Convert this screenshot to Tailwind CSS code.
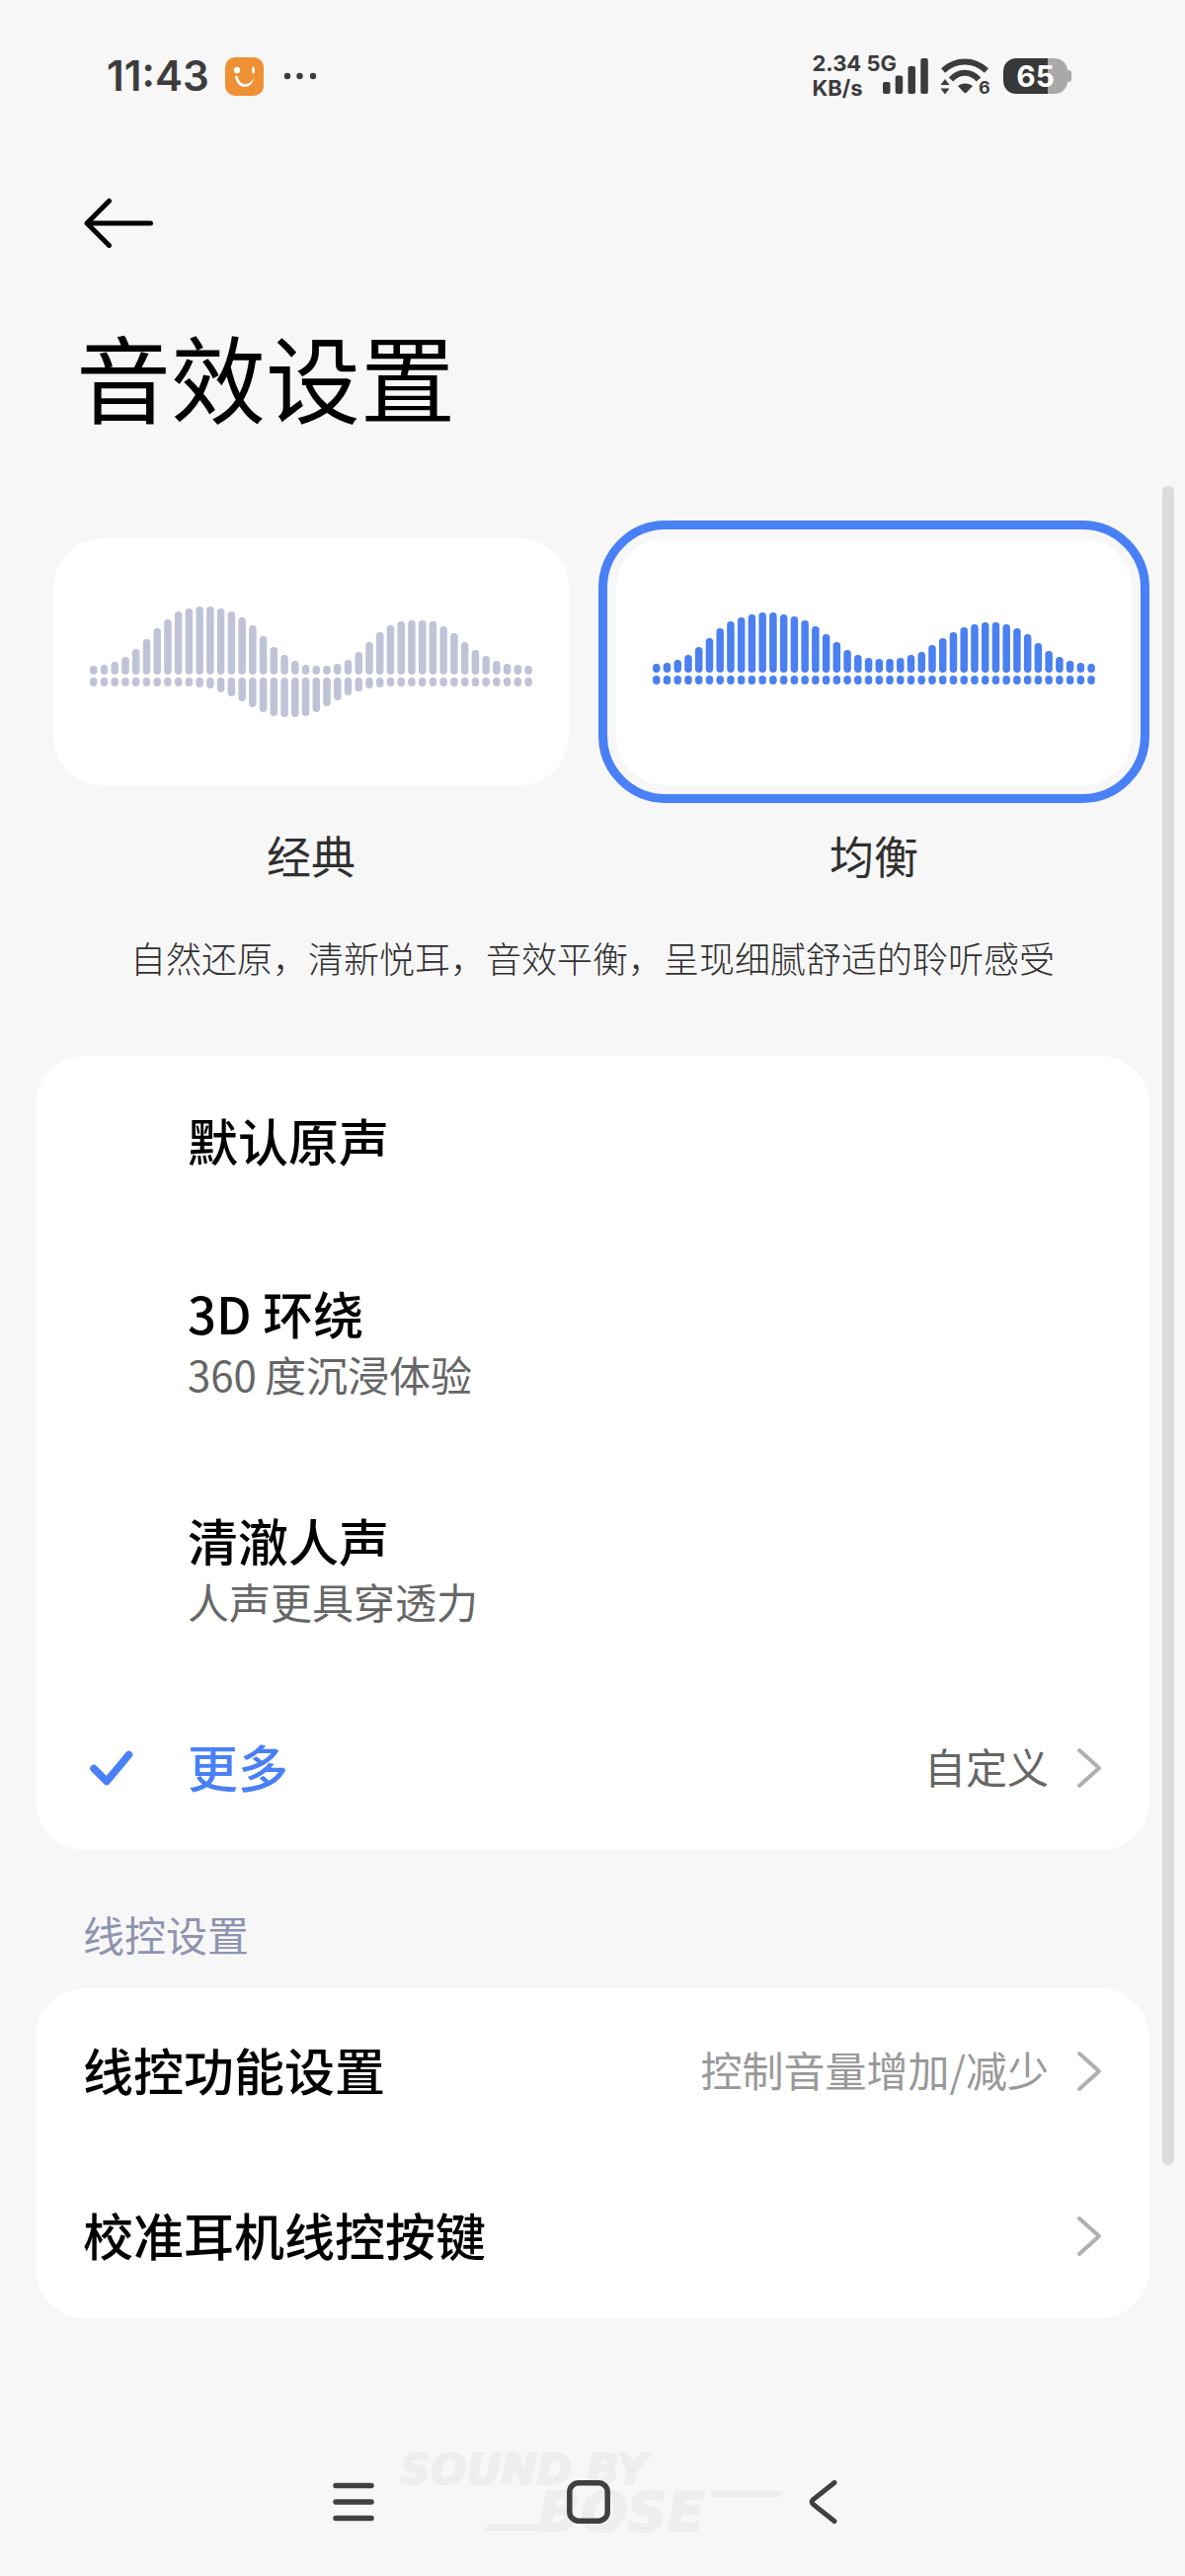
<!DOCTYPE html>
<html lang="zh-CN">
<head>
    <meta charset="UTF-8">
    <meta name="viewport" content="width=device-width, initial-scale=1.0">
    <title>音效设置</title>
    <script src="https://cdn.jsdelivr.net/npm/@tailwindcss/browser@4"></script>
</head>
<body class="relative flex min-h-screen flex-col bg-[#f7f7f7] font-['Noto_Sans_CJK_SC',sans-serif] text-black">

    <!-- Status bar -->
    <div class="flex h-[154px] items-center justify-between pr-[115px] pl-[108px] font-['Inter',sans-serif] text-[#3c3c3c]">
        <div class="flex items-center">
            <span class="text-[42px] leading-none font-semibold">11:43</span>
            <svg class="ml-4 size-[39px]" viewBox="0 0 39 39">
                <rect width="39" height="39" rx="10" fill="#f09035"/>
                <circle cx="12" cy="13" r="3.200" fill="#fff"/>
                <ellipse cx="28.500" cy="13" rx="1.400" ry="3.500" fill="#fff"/>
                <path d="M10 19.500C11 26 15 30 20 30C25 30 28.500 26 29 20.500C27 25 24 27 20.500 27C16.500 27 14 24.500 13 20C12.500 18.500 10 18.500 10 19.500Z" fill="#fff"/>
            </svg>
            <svg class="ml-5 h-[8px] w-[34px]" viewBox="0 0 34 8" fill="currentColor">
                <circle cx="4" cy="4" r="3.200"/><circle cx="16.500" cy="4" r="3.200"/><circle cx="30" cy="4" r="3.200"/>
            </svg>
        </div>
        <div class="flex items-center">
            <div class="text-[22px] leading-[25px] font-bold">
                <div>2.34 5G</div>
                <div>KB/s</div>
            </div>
            <svg class="-ml-[14px] h-[36px] w-[46px]" viewBox="0 0 46 36" fill="currentColor">
                <rect x="0" y="24" width="7.500" height="12" rx="2"/>
                <rect x="12.700" y="17.500" width="7.500" height="18.500" rx="2"/>
                <rect x="25.500" y="8" width="7.500" height="28" rx="2"/>
                <rect x="38.300" y="0" width="7.500" height="36" rx="2"/>
            </svg>
            <svg class="ml-3 h-[37px] w-[52px]" viewBox="0 0 52 37">
                <path d="M3 12.500C16 0.500 34 0.500 47 12.500" fill="none" stroke="currentColor" stroke-width="6"/>
                <path d="M11 21.500C19 12.500 31 12.500 39 21.500" fill="none" stroke="currentColor" stroke-width="6"/>
                <path d="M18 28C21.500 24.500 29 24.500 33 28L27 34.500Q25.500 36 24 34.500Z" fill="currentColor"/>
                <path d="M0.500 27L5 21L9.500 27ZM0.500 30.500L5 36.500L9.500 30.500Z" fill="currentColor"/>
                <text x="39" y="36" font-size="18" font-weight="700" fill="currentColor">6</text>
            </svg>
            <div class="ml-3 flex h-[36px] w-[65px] items-center justify-center rounded-[13px] bg-gradient-to-r from-[#383838] from-70% to-[#a9a9a9] to-70% text-[30px] leading-none font-bold text-white">65</div>
            <div class="h-[12px] w-[4px] rounded-r-[3px] bg-[#a9a9a9]"></div>
        </div>
    </div>

    <header>
        <div class="flex h-[144px] items-center pl-[84px]">
            <button type="button" aria-label="返回">
                <svg class="h-[52px] w-[72px]" viewBox="0 0 72 52" fill="none" stroke="currentColor" stroke-width="5" stroke-linecap="round" stroke-linejoin="round">
                    <path d="M26.500 3.500L4 26L26.500 48.500M5 26H68.500"/>
                </svg>
            </button>
        </div>
        <h1 class="mt-[10px] pl-[77px] text-[96px] leading-[144px]">音效设置</h1>
    </header>

    <main>
        <fieldset class="mt-[93px] grid grid-cols-2 gap-[48px] px-[54px] text-center text-[45px] leading-[60px] text-[#303030]">
            <label class="relative">
                <input type="radio" name="style" class="sr-only">
                <svg data-wave="classic" class="w-full rounded-[50px] bg-white" viewBox="0 0 522 250" fill="#c0c3d7"></svg>
                <span class="mt-[41px] block">经典</span>
            </label>
            <label class="relative">
                <input type="radio" name="style" class="sr-only" checked>
                <svg data-wave="balanced" class="w-full rounded-[50px] bg-white outline-[9px] outline-offset-[9px] outline-[#4a80f6]" viewBox="0 0 522 250" fill="#4a80f0"></svg>
                <span class="mt-[41px] block">均衡</span>
            </label>
        </fieldset>
        <p class="mt-[46px] text-center text-[36px] leading-[54px] font-light text-[#303030]">自然还原，清新悦耳，音效平衡，呈现细腻舒适的聆听感受</p>

        <fieldset class="mx-[36px] mt-[73px] rounded-[50px] bg-white text-[51px] leading-[62px] font-medium">
            <label class="relative mb-1 flex h-[174px] items-center pl-[154px]">
                <input type="radio" name="effect" class="sr-only">
                <span class="pb-1">默认原声</span>
            </label>
            <label class="relative flex h-[230px] items-center pl-[154px]">
                <input type="radio" name="effect" class="sr-only">
                <span class="pb-1">3D 环绕<small class="block text-[42px] font-normal text-[#666]"><span class="mr-2">360</span>度沉浸体验</small></span>
            </label>
            <label class="relative flex h-[230px] items-center pl-[154px]">
                <input type="radio" name="effect" class="sr-only">
                <span class="pb-1">清澈人声<small class="block text-[42px] font-normal text-[#666]">人声更具穿透力</small></span>
            </label>
            <label class="relative flex h-[166px] items-center pr-[48px] pl-[54px] text-[#4a80f6]">
                <input type="radio" name="effect" class="sr-only" checked>
                <svg class="h-[38px] w-[46px]" viewBox="0 0 46 38" fill="none" stroke="currentColor" stroke-width="7.500" stroke-linecap="round" stroke-linejoin="round">
                    <path d="M5 19.500L18 32.500L40.500 5.500"/>
                </svg>
                <span class="ml-[54px] pb-1">更多</span>
                <span class="mr-[28px] ml-auto pb-1 text-[42px] font-normal text-[#666]">自定义</span>
                <svg class="h-[42px] w-[26px]" viewBox="0 0 26 42" fill="none" stroke="#b0b0b0" stroke-width="4" stroke-linecap="round" stroke-linejoin="round">
                    <path d="M3 3L23 21L3 39"/>
                </svg>
            </label>
        </fieldset>

        <h2 class="mt-[55px] pl-[84px] text-[42px] leading-[60px] text-[#8f93b0]">线控设置</h2>
        <div class="mx-[36px] mt-[25px] rounded-[50px] bg-white text-[51px] leading-[62px] font-medium">
            <a href="#" class="flex h-[167px] items-center px-[48px]">
                <span class="pb-1">线控功能设置</span>
                <span class="mr-[28px] ml-auto pb-1 text-[42px] font-normal text-[#999]">控制音量增加/减少</span>
                <svg class="h-[42px] w-[26px]" viewBox="0 0 26 42" fill="none" stroke="#b0b0b0" stroke-width="4" stroke-linecap="round" stroke-linejoin="round">
                    <path d="M3 3L23 21L3 39"/>
                </svg>
            </a>
            <a href="#" class="flex h-[167px] items-center justify-between px-[48px]">
                <span class="pb-1">校准耳机线控按键</span>
                <svg class="h-[42px] w-[26px]" viewBox="0 0 26 42" fill="none" stroke="#b0b0b0" stroke-width="4" stroke-linecap="round" stroke-linejoin="round">
                    <path d="M3 3L23 21L3 39"/>
                </svg>
            </a>
        </div>
    </main>

    <!-- System navigation, with the faint brand mark behind it -->
    <nav class="relative mt-auto flex h-[150px] items-center justify-center gap-[192px] pr-2 text-[#404040]">
        <svg class="absolute top-[28px] left-1/2 h-[80px] w-[390px] -translate-x-1/2 overflow-visible font-['DejaVu_Sans',sans-serif]" viewBox="0 0 390 80" fill="#eeeeee" stroke="#eeeeee" stroke-width="2">
            <text x="0" y="29" font-size="43" font-weight="700" font-style="italic">SOUND BY</text>
            <text x="140" y="76" font-size="56" font-weight="700" font-style="italic">BOSE</text>
            <path d="M90 71H144L143 75H86ZM316 37H388L384 41H315Z"/>
        </svg>
        <button type="button" aria-label="最近任务" class="relative">
            <svg class="size-[46px]" viewBox="0 0 46 46" stroke="currentColor" stroke-width="5.500" stroke-linecap="round">
                <path d="M5 6.500H41M5 23H41M5 39.500H41"/>
            </svg>
        </button>
        <button type="button" aria-label="主屏幕" class="relative">
            <svg class="size-[46px]" viewBox="0 0 46 46" fill="none" stroke="currentColor" stroke-width="5.500">
                <rect x="3.800" y="3.800" width="38.400" height="38.400" rx="9"/>
            </svg>
        </button>
        <button type="button" aria-label="返回上一页" class="relative">
            <svg class="size-[46px]" viewBox="0 0 46 46" fill="none" stroke="currentColor" stroke-width="5" stroke-linecap="round">
                <path d="M34 3.500L12.500 20.500Q10 23 12.500 25.500L34 42.500"/>
            </svg>
        </button>
    </nav>

    <div class="absolute top-[492px] right-[11px] h-[1700px] w-[12px] rounded-full bg-[#dcdcdc]"></div>

    <script>
        // Bar heights above and below the centre line
        const waves = {
            classic: {
                base: 138,
                up: [9, 10, 13, 18, 26, 36, 47, 56, 64, 67, 69, 69, 67, 64, 58, 50, 39, 28, 20, 14, 10, 9, 9, 11, 15, 23, 33, 43, 50, 54, 55, 55, 54, 49, 42, 33, 25, 19, 14, 11, 10, 9],
                down: { 10: 10, 11: 11, 12: 15, 13: 19, 14: 24, 15: 30, 16: 35, 17: 39, 18: 40, 19: 40, 20: 39, 21: 35, 22: 29, 23: 23, 24: 18, 25: 14, 26: 11, 27: 10 }
            },
            balanced: {
                base: 136,
                up: [9, 10, 13, 18, 26, 35, 45, 52, 56, 59, 61, 61, 59, 57, 53, 47, 39, 31, 23, 18, 15, 14, 14, 15, 18, 21, 28, 35, 41, 46, 49, 51, 51, 49, 45, 39, 30, 22, 16, 12, 10, 9],
                down: {}
            }
        };

        document.querySelectorAll('[data-wave]').forEach(svg => {
            const wave = waves[svg.dataset.wave];
            const bar = (x, y, h) => `<rect x="${x}" y="${y}" width="7.5" height="${h}" rx="3.7"/>`;
            svg.innerHTML = wave.up.map((h, i) => {
                const x = 37 + i * 10.74;
                return bar(x, wave.base - h, h) + bar(x, wave.base + 3, wave.down[i] || 9);
            }).join('');
        });
    </script>
</body>
</html>
